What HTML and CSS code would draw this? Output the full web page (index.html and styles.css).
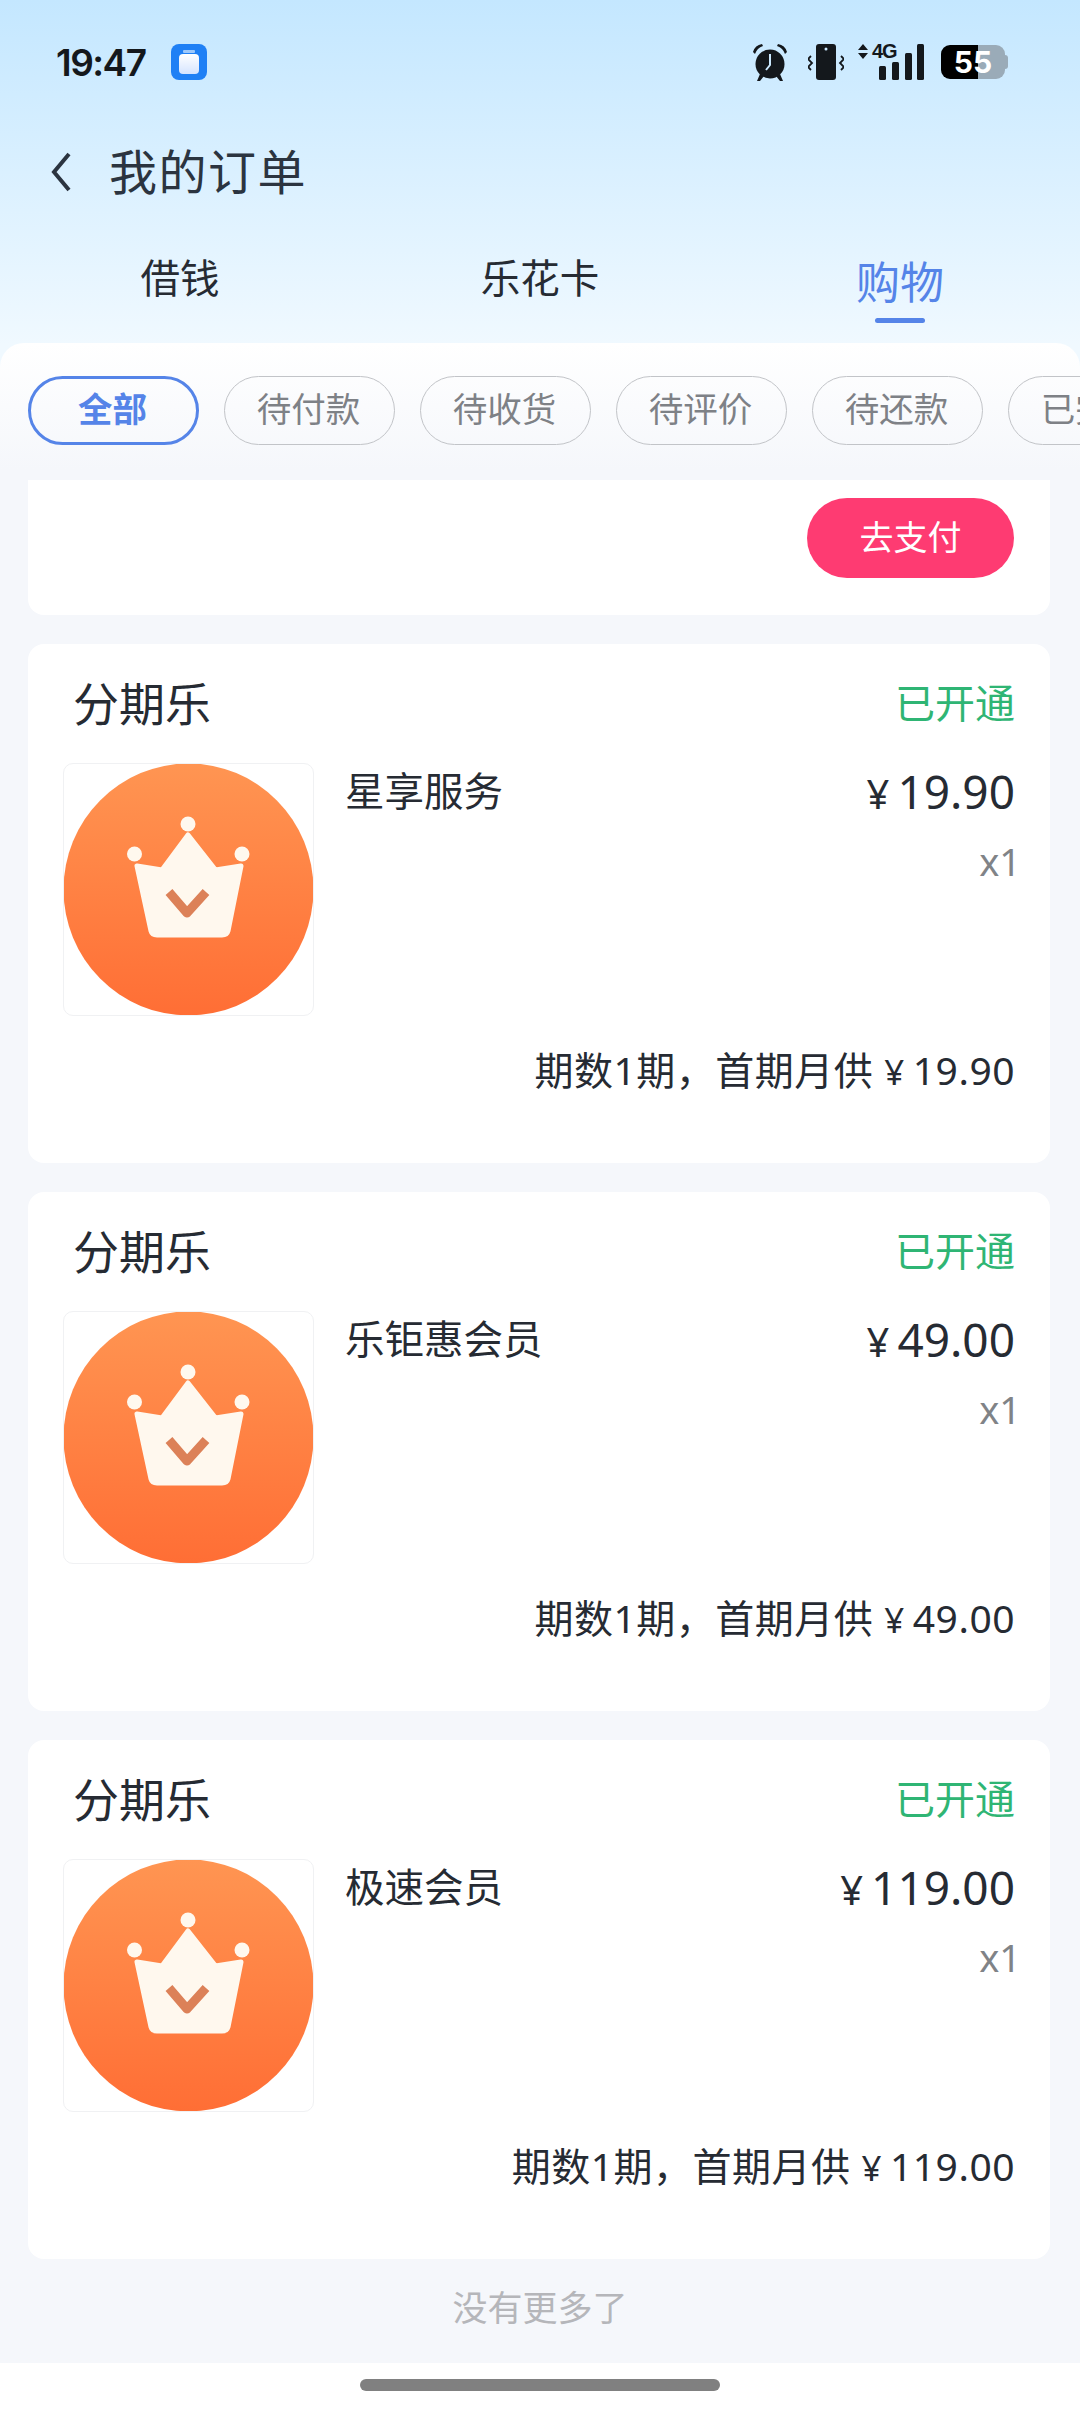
FILE: index.html
```html
<!DOCTYPE html>
<html lang="zh-CN">
<head>
  <meta charset="UTF-8">
  <meta name="viewport" content="width=device-width, initial-scale=1.0">
  <title>我的订单</title>
  <link rel="stylesheet" href="styles.css">
</head>
<body>
  <svg class="defs" width="0" height="0">
    <defs>
      <linearGradient id="badge-fill" x1="0" y1="0" x2="0" y2="1">
        <stop offset="0" stop-color="#ff9552"/>
        <stop offset="1" stop-color="#ff6e35"/>
      </linearGradient>
      <linearGradient id="jar-fill" x1="0" y1="0" x2="0" y2="1">
        <stop offset="0" stop-color="#ffffff"/>
        <stop offset="1" stop-color="#d5e4ff"/>
      </linearGradient>
      <symbol id="crown" viewBox="0 0 251 253">
        <ellipse cx="125.5" cy="126.5" rx="125" ry="126" fill="url(#badge-fill)"/>
        <circle cx="125" cy="61" r="7.5" fill="#fff8ee"/>
        <circle cx="71.5" cy="91" r="7.5" fill="#fff8ee"/>
        <circle cx="179" cy="91" r="7.5" fill="#fff8ee"/>
        <path d="M125 72 L152.5 107 L178 103 L165 168 Q164 172 159 172 L94 172 Q89 172 88 168 L74 103 L99 107 Z" fill="#fff8ee" stroke="#fff8ee" stroke-width="5" stroke-linejoin="round"/>
        <path d="M106 129 L124 150 L143 129" fill="none" stroke="#dc8158" stroke-width="9" stroke-linejoin="round"/>
      </symbol>
    </defs>
  </svg>

  <header class="top">
    <div class="status">
      <span class="time">19:47</span>
      <svg class="app-icon" width="36" height="36" viewBox="0 0 36 36">
        <rect width="36" height="36" rx="8" fill="#1f80f5"/>
        <rect x="12" y="6" width="12" height="3" rx="1" fill="#9cc8fb"/>
        <rect x="8" y="10" width="20" height="20" rx="4" fill="url(#jar-fill)"/>
      </svg>
      <div class="status-right">
        <svg width="38" height="38" viewBox="0 0 38 38">
          <circle cx="19" cy="21" r="14.5" fill="#14181c"/>
          <path d="M19 11 V22 L15 27" fill="none" stroke="#cbe9ff" stroke-width="2"/>
          <path d="M2 9 Q4 2 11 1 L12 3 Q6 5 4 11 Z M36 9 Q34 2 27 1 L26 3 Q32 5 34 11 Z" fill="#14181c"/>
          <path d="M9 31 L6 38 H9 L13 33 Z M29 31 L32 38 H29 L25 33 Z" fill="#14181c"/>
        </svg>
        <svg width="36" height="36" viewBox="0 0 36 36">
          <rect x="8" y="0" width="20" height="36" rx="3" fill="#14181c"/>
          <circle cx="18" cy="5" r="1.5" fill="#cbe9ff"/>
          <path d="M3 12 L0 15 L4 19 L0 23 L3 26 M33 12 L36 15 L32 19 L36 23 L33 26" fill="none" stroke="#14181c" stroke-width="1.8"/>
        </svg>
        <div class="signal">
          <div class="net">
            <svg width="10" height="15" viewBox="0 0 10 15">
              <path d="M5 0 L10 6 H0 Z M5 15 L10 9 H0 Z" fill="#14181c"/>
            </svg>
            <span class="net-label">4G</span>
          </div>
          <svg class="bars" width="46" height="36" viewBox="0 0 46 36">
            <rect x="1" y="22" width="7" height="14" rx="1.5" fill="#14181c"/>
            <rect x="14" y="18" width="7" height="18" rx="1.5" fill="#14181c"/>
            <rect x="27" y="9" width="7" height="27" rx="1.5" fill="#14181c"/>
            <rect x="39" y="0" width="7" height="36" rx="1.5" fill="#14181c"/>
          </svg>
        </div>
        <div class="battery"><span>55</span></div>
      </div>
    </div>
    <div class="nav">
      <svg width="20" height="40" viewBox="0 0 20 40">
        <path d="M18 2 L3 20 L18 38" fill="none" stroke="#2b3440" stroke-width="4"/>
      </svg>
      <h1>我的订单</h1>
    </div>
    <div class="tabs">
      <div class="tab">借钱</div>
      <div class="tab">乐花卡</div>
      <div class="tab active">购物</div>
    </div>
  </header>

  <main class="sheet">
    <div class="chips">
      <span class="chip active">全部</span>
      <span class="chip">待付款</span>
      <span class="chip">待收货</span>
      <span class="chip">待评价</span>
      <span class="chip">待还款</span>
      <span class="chip">已完成</span>
    </div>

    <div class="list">
      <section class="card card-clipped">
        <button class="pay">去支付</button>
      </section>

      <section class="card">
        <div class="card-head">
          <span class="shop">分期乐</span>
          <span class="state">已开通</span>
        </div>
        <div class="item">
          <svg class="thumb"><use href="#crown"/></svg>
          <span class="name">星享服务</span>
          <div class="amount">
            <div class="price"><span class="yen">¥</span>19.90</div>
            <div class="qty">x1</div>
          </div>
        </div>
        <div class="summary">期数1期，首期月供<span class="yen">¥</span>19.90</div>
      </section>

      <section class="card">
        <div class="card-head">
          <span class="shop">分期乐</span>
          <span class="state">已开通</span>
        </div>
        <div class="item">
          <svg class="thumb"><use href="#crown"/></svg>
          <span class="name">乐钜惠会员</span>
          <div class="amount">
            <div class="price"><span class="yen">¥</span>49.00</div>
            <div class="qty">x1</div>
          </div>
        </div>
        <div class="summary">期数1期，首期月供<span class="yen">¥</span>49.00</div>
      </section>

      <section class="card">
        <div class="card-head">
          <span class="shop">分期乐</span>
          <span class="state">已开通</span>
        </div>
        <div class="item">
          <svg class="thumb"><use href="#crown"/></svg>
          <span class="name">极速会员</span>
          <div class="amount">
            <div class="price"><span class="yen">¥</span>119.00</div>
            <div class="qty">x1</div>
          </div>
        </div>
        <div class="summary">期数1期，首期月供<span class="yen">¥</span>119.00</div>
      </section>
    </div>

    <p class="end">没有更多了</p>
  </main>

  <div class="home-bar"><span></span></div>
</body>
</html>
```

FILE: styles.css
```css
* {
  box-sizing: border-box;
}
html,
body {
  margin: 0;
  padding: 0;
}
body {
  width: 1080px;
  height: 2412px;
  overflow: hidden;
  display: flex;
  flex-direction: column;
  background: linear-gradient(#c4e7ff 0, #f0f9ff 345px);
  color: #262b33;
  font-family: "Noto Sans", "Noto Sans CJK SC", sans-serif;
}
.defs {
  position: absolute;
}

/* status bar + title + tabs */
.top {
  height: 343px;
  flex: none;
}
.status {
  height: 124px;
  padding: 0 75px 0 56px;
  display: flex;
  align-items: center;
}
.time {
  font-family: Inter, sans-serif;
  font-size: 37px;
  font-weight: 600;
  letter-spacing: -1.5px;
  color: #14181c;
  width: 115px;
}
.status-right {
  margin-left: auto;
  display: flex;
  align-items: center;
}
.status-right svg {
  display: block;
}
.status-right > svg:nth-child(2) {
  margin-left: 19px;
}
.signal {
  margin-left: 14px;
  width: 66px;
  height: 36px;
  position: relative;
}
.net {
  display: flex;
  align-items: flex-start;
  gap: 4px;
}
.net-label {
  font-family: "Liberation Sans", sans-serif;
  font-size: 20px;
  font-weight: 700;
  line-height: 15px;
  letter-spacing: -1px;
  color: #14181c;
}
.bars {
  position: absolute;
  right: 0;
  top: 0;
}
.battery {
  margin-left: 17px;
  width: 64px;
  height: 34px;
  border-radius: 9px;
  background: linear-gradient(90deg, #000 37px, #9aabb8 37px);
  color: #fff;
  font-family: Inter, sans-serif;
  font-size: 30px;
  font-weight: 700;
  line-height: 34px;
  text-align: center;
  position: relative;
}
.battery::after {
  content: "";
  position: absolute;
  right: -3px;
  top: 10px;
  width: 3px;
  height: 14px;
  border-radius: 0 3px 3px 0;
  background: #9aabb8;
}
.nav {
  height: 96px;
  padding-left: 51px;
  display: flex;
  align-items: center;
  gap: 38px;
  color: #2b3440;
}
.nav h1 {
  margin: -6px 0 0;
  font-size: 48px;
  font-weight: 400;
  letter-spacing: 1.5px;
  font-family: "Noto Sans CJK SC", sans-serif;
}
.tabs {
  display: grid;
  grid-template-columns: repeat(3, 360px);
  padding-top: 26px;
}
.tab {
  font-size: 39.5px;
  line-height: 60px;
  text-align: center;
  color: #262b33;
  font-family: "Noto Sans CJK SC", sans-serif;
}
.tab.active {
  margin-top: 4px;
  font-size: 44px;
  color: #5584e8;
}
.tab.active::after {
  content: "";
  display: block;
  width: 50px;
  height: 5px;
  margin: 8px auto 0;
  border-radius: 3px;
  background: #5584e8;
}

/* sheet */
.sheet {
  flex: 1;
  border-radius: 24px 24px 0 0;
  background: linear-gradient(#fff 0, #f5f7fb 127px);
  display: flex;
  flex-direction: column;
  font-family: "Noto Sans", "Noto Sans CJK SC", sans-serif;
}
.chips {
  height: 137px;
  padding: 33px 0 0 28px;
  display: flex;
  gap: 25px;
  overflow: hidden;
  flex: none;
}
.chip {
  flex: none;
  width: 171px;
  height: 69px;
  padding-right: 2px;
  border: 1.5px solid #c2c4c8;
  border-radius: 35px;
  font-size: 34.5px;
  line-height: 60px;
  text-align: center;
  color: #7e8186;
  font-family: "Noto Sans CJK SC", sans-serif;
  white-space: nowrap;
}
.chip.active {
  border: 3px solid #5584e8;
  color: #5584e8;
  font-weight: 700;
  line-height: 57px;
}
.list {
  padding: 0 30px 0 28px;
  display: flex;
  flex-direction: column;
  gap: 29px;
}
.card {
  height: 519px;
  padding: 0 35px;
  border-radius: 16px;
  background: #fff;
}
.card-clipped {
  height: 135px;
  padding-top: 18px;
  border-radius: 0 0 16px 16px;
  display: flex;
  justify-content: flex-end;
  align-items: flex-start;
}
.pay {
  width: 207px;
  height: 80px;
  margin-right: 1px;
  padding: 0 0 6px;
  border: 0;
  border-radius: 40px;
  background: #fe3b72;
  color: #fff;
  font-family: "Noto Sans CJK SC", sans-serif;
  font-size: 34px;
}
.card-head {
  height: 119px;
  padding: 0 0 6px 10px;
  display: flex;
  justify-content: space-between;
  align-items: center;
}
.shop {
  font-size: 46px;
  color: #262b33;
}
.state {
  font-size: 40px;
  color: #2fb574;
}
.item {
  display: flex;
  height: 253px;
}
.thumb {
  flex: none;
  width: 251px;
  height: 253px;
  outline: 1px solid #f0f1f3;
  outline-offset: -1px;
  border-radius: 10px;
}
.name {
  margin-left: 31px;
  font-size: 39.5px;
  line-height: 56px;
}
.amount {
  margin-left: auto;
  text-align: right;
}
.price {
  font-size: 46px;
  line-height: 56px;
}
.yen {
  font-size: 40px;
  margin-right: 8px;
}
.qty {
  margin-top: 14px;
  margin-right: -6px;
  font-size: 38px;
  line-height: 50px;
  color: #808387;
}
.summary {
  margin-top: 26px;
  font-size: 39px;
  line-height: 56px;
  letter-spacing: 0.5px;
  text-align: right;
}
.summary .yen {
  font-size: 35px;
  margin: 0 8px 0 11px;
}
.end {
  margin: 25px 0 0;
  font-size: 35px;
  line-height: 44px;
  text-align: center;
  color: #b5b6ba;
  font-family: "Noto Sans CJK SC", sans-serif;
}

/* gesture bar */
.home-bar {
  height: 49px;
  flex: none;
  background: #fff;
  padding-top: 16px;
}
.home-bar span {
  display: block;
  width: 360px;
  height: 12px;
  margin: 0 auto;
  border-radius: 6px;
  background: #808080;
}
```
